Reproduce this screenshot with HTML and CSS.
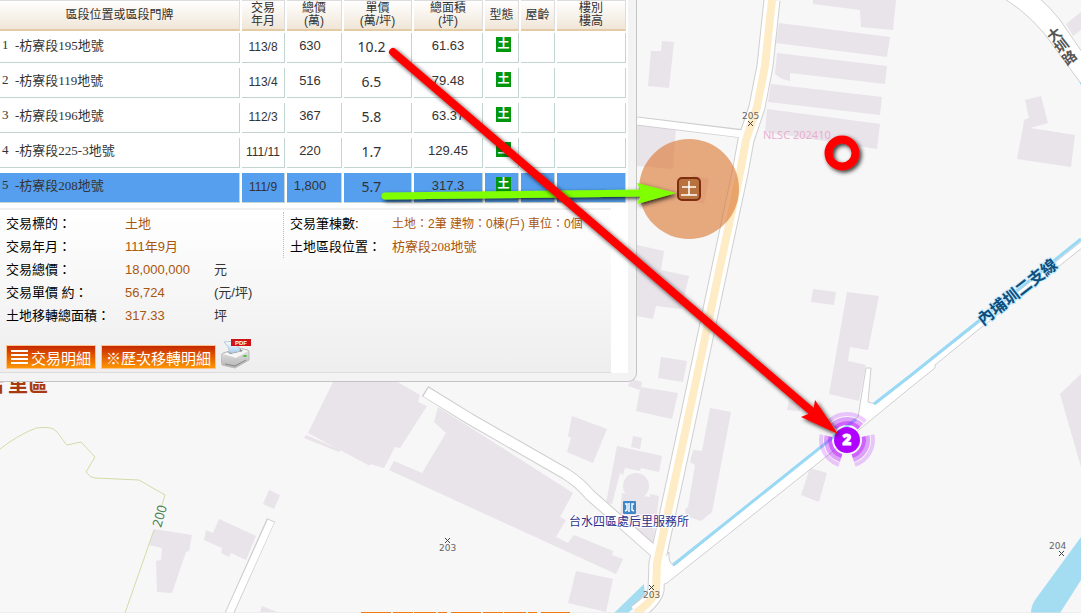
FILE: index.html
```html
<!DOCTYPE html>
<html lang="zh-Hant">
<head>
    <meta charset="UTF-8">
    <meta name="viewport" content="width=device-width, initial-scale=1.0">
    <title>實價登錄地圖</title>
    <link rel="stylesheet" href="styles.css">
</head>
<body>
    <svg class="map" aria-hidden="true">
        <!-- buildings -->
        <g class="building">
            <path d="M662 41L674 42L669 88L648 86L651 51L661 51Z"/>
            <path d="M813 0H896L893 30L861 27L860 10L813 4Z"/>
            <path d="M779 23L890 37L887 57L776 43Z"/>
            <path d="M777 53L887 66L885 84L790 73V81L782 79L775 74Z"/>
            <path d="M771 84L882 97L880 115L768 102Z"/>
            <path d="M767 109L880 124L877 149L765 132Z"/>
            <path d="M637 125L676 128L673 169L637 166Z"/>
            <path d="M693 175L709 179L704 204L690 200Z"/>
            <path d="M637 245L664 251L661 270L689 276L681 309L656 306L653 319L637 316Z"/>
            <path d="M661 357L687 361L683 382L658 378Z"/>
            <path d="M631 379L642 382L641 387L678 393L672 419L636 411L640 390L628 386Z"/>
            <path d="M710 408L731 412L712 512L701 521L686 516L685 509L688 507L695 465L690 462L693 450L702 451Z"/>
            <path d="M572 416L607 429L593 463L567 452L571 438L568 436Z"/>
            <path d="M633 436L642 438L640 449L631 447Z"/>
            <path d="M617 446L662 456L659 472L641 468L640 471L625 468L623 475L620 473L612 504L606 503Z"/>
            <circle cx="636" cy="486" r="13"/>
            <path d="M622 493L650 497V494L659 496L653 543L620 516Z"/>
            <path d="M576 571L613 579L606 612L568 603Z"/>
            <path d="M334 380H394L420 395L418 402L427 406L400 448L395 447L384 468L370 464V466L308 433Z"/>
            <path d="M306 435L341 450L339 452L304 438Z"/>
            <path d="M438 407L573 493L560 517L566 520L556 537L568 543L574 535L613 551L612 555L623 559L616 574L389 470L394 461L422 473L446 433L434 422Z"/>
            <path d="M813 289L836 292L834 305L811 302Z"/>
            <path d="M847 292L879 296L868 350L850 347L848 361L866 365L859 401L829 394Z"/>
            <path d="M789 400L800 404V411L787 410Z"/>
            <path d="M810 468L827 473L819 502L801 495Z"/>
            <path d="M1025 100L1041 96L1048 123L1030 128L1075 135L1071 167L1017 159L1023 127L1024 120L1029 118Z"/>
            <path d="M1066 24L1081 12V30L1073 36Z"/>
            <path d="M1060 394L1081 374V467Z"/>
            <path d="M154 529L192 535L189 551L186 552L172 593L157 592L156 561L161 560L162 548L149 545Z"/>
            <path d="M219 519L256 536L246 560L231 553L229 557L221 553L222 548L204 540L206 530L213 533Z"/>
            <path d="M269 490L280 495L274 509L263 504Z"/>
            <path d="M262 606L277 612H260Z"/>
        </g>

        <!-- contour line -->
        <path class="contour" d="M0 449Q18 435 36 428Q52 426 56 431C61 436 65 444 67 445L81 442L95 457L86 472Q90 478 95 478L139 480L165 495L161 508M154 530L125 613"/>

        <!-- water -->
        <path class="river" d="M1081 537L1035 600Q1031 606 1031 613H1060L1081 580Z"/>
        <path class="river" d="M644 584L614 613H628L645 598Z"/>

        <!-- roads: edge, surface, centre -->
        <path class="road-edge wide" d="M772 0L765 66L757 107L746 140L740 173L724 248L713 300L682 447L657 563L656 590Q654 600 636 613"/>
        <path class="road-edge mid" d="M425 391L470 419L566 474Q580 483 590 495L655 552"/>
        <path class="road-edge side" d="M637 121L745 134M271 520L229 614"/>
        <path class="road-shape" d="M1005 -1Q1035 18 1055 48L1082 85V52L1060 20Q1050 7 1040 -1Z"/>
        <path class="road-shape" d="M655 588L667 583L832 452L910 388L935 368V365L978 330L1082 248V241L876 404L868 402L871 368H866L858 417L674 566Q668 563 669 552L650 576Z"/>
        <path class="road mid" d="M426 392L470 419L566 474Q580 483 590 495L657 554"/>
        <path class="road side" d="M637 121L750 135M271 521L229 614"/>
        <path class="road wide" d="M772 0L765 66L757 107L746 140L740 173L724 248L713 300L682 447L657 563L656 590Q654 600 636 613"/>
        <path class="road-main" d="M772 0L765 66L757 107L746 140L740 173L724 248L713 300L682 447L657 563L656 590Q654 600 636 613"/>
        <path class="canal" d="M673 565L856 419M874 404L910 376L1081 239M1081 82L1090 100"/>

        <!-- spot heights -->
        <g class="spot-mark">
            <path d="M748 121l5 5m0-5l-5 5M445 538l5 5m0-5l-5 5M649 585l5 5m0-5l-5 5M1059 551l5 5m0-5l-5 5"/>
        </g>
        <g class="spot-label">
            <text x="742" y="119">205</text>
            <text x="439" y="551">203</text>
            <text x="643" y="598">203</text>
            <text x="1049" y="549">204</text>
        </g>
        <text class="contour-label" transform="translate(161 528) rotate(-74)">200</text>
        <text class="watermark" x="763" y="139">NLSC 202410</text>

        <!-- place names -->
        <text class="town" x="-16 8 28" y="392">后里區</text>
        <text class="road-name" x="1052 1059 1067" y="43 54 66" rotate="-38">大圳路</text>
        <text class="canal-name" transform="translate(983 326) rotate(-38)">內埔圳二支線</text>
        <rect class="water-icon" x="623" y="501" width="13" height="13" rx="1"/>
        <path class="water-glyph" d="M629 503v9M625 504h2v6l-2 1M634 504h-2v6l2 1"/>
        <text class="place" x="569" y="526">台水四區處后里服務所</text>

        <path class="foot-line" d="M0 613H1081"/>
        <path class="foot-marks" d="M361 613H570"/>
    </svg>

    <main class="panel">
        <div class="panel-body">
            <table class="deals">
                <thead>
                    <tr>
                        <th>區段位置或區段門牌</th>
                        <th>交易<br>年月</th>
                        <th>總價<br>(萬)</th>
                        <th>單價<br>(萬/坪)</th>
                        <th>總面積<br>(坪)</th>
                        <th>型態</th>
                        <th>屋齡</th>
                        <th>樓別<br>樓高</th>
                    </tr>
                </thead>
                <tbody>
                    <tr>
                        <td class="name"><span class="no">1</span>-枋寮段195地號</td>
                        <td class="date">113/8</td>
                        <td>630</td>
                        <td class="unit-price">10.2</td>
                        <td>61.63</td>
                        <td><span class="type">土</span></td>
                        <td></td>
                        <td></td>
                    </tr>
                    <tr>
                        <td class="name"><span class="no">2</span>-枋寮段119地號</td>
                        <td class="date">113/4</td>
                        <td>516</td>
                        <td class="unit-price">6.5</td>
                        <td>79.48</td>
                        <td><span class="type">土</span></td>
                        <td></td>
                        <td></td>
                    </tr>
                    <tr>
                        <td class="name"><span class="no">3</span>-枋寮段196地號</td>
                        <td class="date">112/3</td>
                        <td>367</td>
                        <td class="unit-price">5.8</td>
                        <td>63.37</td>
                        <td><span class="type">土</span></td>
                        <td></td>
                        <td></td>
                    </tr>
                    <tr>
                        <td class="name"><span class="no">4</span>-枋寮段225-3地號</td>
                        <td class="date">111/11</td>
                        <td>220</td>
                        <td class="unit-price">1.7</td>
                        <td>129.45</td>
                        <td><span class="type">土</span></td>
                        <td></td>
                        <td></td>
                    </tr>
                    <tr class="selected">
                        <td class="name"><span class="no">5</span>-枋寮段208地號</td>
                        <td class="date">111/9</td>
                        <td>1,800</td>
                        <td class="unit-price">5.7</td>
                        <td>317.3</td>
                        <td><span class="type">土</span></td>
                        <td></td>
                        <td></td>
                    </tr>
                </tbody>
            </table>

            <section class="detail">
                <div class="detail-cols">
                    <dl class="facts">
                        <dt>交易標的：</dt><dd>土地</dd><dd class="unit"></dd>
                        <dt>交易年月：</dt><dd>111年9月</dd><dd class="unit"></dd>
                        <dt>交易總價：</dt><dd>18,000,000</dd><dd class="unit">元</dd>
                        <dt>交易單價 約：</dt><dd>56,724</dd><dd class="unit">(元/坪)</dd>
                        <dt>土地移轉總面積：</dt><dd>317.33</dd><dd class="unit">坪</dd>
                    </dl>
                    <dl class="facts place-facts">
                        <dt>交易筆棟數:</dt><dd class="count">土地：2筆 建物：0棟(戶) 車位：0個</dd>
                        <dt>土地區段位置：</dt><dd class="lot">枋寮段208地號</dd>
                    </dl>
                </div>
                <div class="actions">
                    <button type="button" class="action">
                        <svg width="17" height="14" aria-hidden="true"><path d="M0 1h17M0 5h17M0 9h17M0 13h17" stroke="#fff" stroke-width="2"/></svg>交易明細
                    </button>
                    <button type="button" class="action">※歷次移轉明細</button>
                    <button type="button" class="print" aria-label="PDF">
                        <svg width="30" height="30" aria-hidden="true">
                            <defs>
                                <linearGradient id="tray" x1="0" y1="0" x2="0" y2="1">
                                    <stop offset="0" stop-color="#e8e8e8"/>
                                    <stop offset="1" stop-color="#b4b4b4"/>
                                </linearGradient>
                                <linearGradient id="sheet" x1="0" y1="0" x2="0" y2="1">
                                    <stop offset="0" stop-color="#ffffff"/>
                                    <stop offset="1" stop-color="#a9cdf0"/>
                                </linearGradient>
                            </defs>
                            <path d="M0 17Q0 15 2 14L18 9L27 11Q28 12 28 14V21L14 29L1 26Z" fill="url(#tray)" stroke="#bbb" stroke-width="1"/>
                            <path d="M2 15L19 10L27 12L15 19Z" fill="#f6f6f6"/>
                            <path d="M7 13L19 10L22 12L9 15Z" fill="#777"/>
                            <path d="M3 3L15 2L19 12L9 14Q8 7 3 3Z" fill="url(#sheet)" stroke="#b9cbd9" stroke-width="1"/>
                            <path d="M4 25L14 27L25 21" fill="none" stroke="#888" stroke-width="1"/>
                            <ellipse cx="24" cy="17" rx="2" ry="1" fill="#4cc02c"/>
                            <rect x="10" y="0" width="20" height="7" fill="#cf1217"/>
                            <text x="20" y="6" class="pdf">PDF</text>
                        </svg>
                    </button>
                </div>
            </section>
        </div>
    </main>

    <svg class="marks" aria-hidden="true">
        <defs>
            <filter id="shadow" x="-50%" y="-50%" width="200%" height="200%">
                <feDropShadow dx="2" dy="2" stdDeviation="2" flood-color="#000" flood-opacity="0.8"/>
            </filter>
        </defs>
        <!-- selected plot -->
        <circle cx="689" cy="189" r="50" fill="#dc7832" fill-opacity="0.62"/>
        <rect x="678" y="178" width="22" height="22" rx="4" fill="#b8723e" stroke="#7d2d10" stroke-width="2"/>
        <path d="M689 181v14M682 187h14M681 195h16" stroke="#fff" stroke-width="1.5" fill="none"/>

        <!-- numbered pin -->
        <g transform="rotate(-12 847 440)" class="waves">
            <circle cx="847" cy="440" r="17" pathLength="360" stroke-opacity="0.6"/>
            <circle cx="847" cy="440" r="21" pathLength="360" stroke-opacity="0.35"/>
            <circle cx="847" cy="440" r="26" pathLength="360" stroke-opacity="0.2"/>
        </g>
        <circle cx="847" cy="440" r="13" fill="#b000ff"/>
        <text x="847" y="445" class="pin-no">2</text>

        <!-- pointers -->
        <g filter="url(#shadow)">
            <path d="M385 196L645 193" stroke="#80ff00" stroke-width="7" stroke-linecap="round"/>
            <path d="M676 193L637 183L642 193L637 204Z" fill="#80ff00"/>
        </g>
        <g filter="url(#shadow)">
            <path d="M393 52L816 415" stroke="#f00" stroke-width="8" stroke-linecap="round"/>
            <path d="M838 434L815 400L813 412L801 417Z" fill="#f00"/>
        </g>
        <circle cx="842" cy="153" r="13.5" fill="none" stroke="#f00" stroke-width="8" filter="url(#shadow)"/>
    </svg>
</body>
</html>
```

FILE: styles.css
```css
body {
    margin: 0;
    height: 100vh;
    overflow: hidden;
    position: relative;
    background-color: #f7f7f7;
    font-family: "Liberation Sans", "Noto Sans CJK TC", sans-serif;
    font-size: 13px;
    color: #333;
}

/* map */
.map, .marks {
    position: absolute;
    top: 0;
    left: 0;
    width: 100%;
    height: 100%;
}
.marks {
    pointer-events: none;
}
.building {
    fill: #e9e3ea;
}
.contour {
    fill: none;
    stroke: #d3dba8;
}
.river {
    fill: #a4dcf1;
}
.canal {
    fill: none;
    stroke: #99d9f5;
    stroke-width: 3;
}
.road-edge, .road, .road-main {
    fill: none;
    stroke: #fff;
}
.road-edge {
    stroke: #cfcfcf;
}
.road-shape {
    fill: #fff;
    stroke: #cfcfcf;
}
.road.wide { stroke-width: 15; }
.road-edge.wide { stroke-width: 17; }
.road.mid { stroke-width: 10; }
.road-edge.mid { stroke-width: 12; }
.road.side { stroke-width: 7; }
.road-edge.side { stroke-width: 9; }
.road-main {
    stroke: #feecc6;
    stroke-width: 8;
}
.spot-mark {
    fill: none;
    stroke: #444;
}
.spot-label {
    font: 9px "DejaVu Sans", sans-serif;
    fill: #666;
}
.contour-label {
    font: 13px "Noto Sans", sans-serif;
    fill: #4c8150;
}
.watermark {
    font: 11px "Noto Sans", sans-serif;
    fill: #e8b0d0;
}
.town {
    font-size: 20px;
    font-weight: bold;
    fill: #a83a12;
}
.road-name {
    font-size: 14px;
    font-weight: bold;
    fill: #555;
}
.canal-name {
    font-size: 16px;
    font-weight: bold;
    fill: #0e4f7e;
    stroke: #c5e9fa;
    stroke-width: 2;
    paint-order: stroke;
}
.place {
    font-size: 12px;
    fill: #2b2f8c;
    stroke: #fff;
    stroke-width: 2;
    paint-order: stroke;
}
.water-icon {
    fill: #3f87c9;
}
.water-glyph {
    fill: none;
    stroke: #fff;
    stroke-width: 1.5;
}
.foot-line {
    stroke: #e4e4e4;
}
.foot-marks {
    stroke: #f07a10;
    stroke-width: 2;
    stroke-dasharray: 30 2 20 1 22 2 9 4;
}

/* result panel */
.panel {
    position: relative;
    width: fit-content;
    padding: 0 8px 8px 0;
    background: #f3f3f3;
    border: 1px solid #c4c4c4;
    border-width: 0 1px 1px 0;
    border-radius: 0 0 9px 0;
}
.panel-body {
    padding-right: 2px;
    background: #fff;
}
.deals, .deals thead, .deals tbody {
    display: block;
}
.deals tr {
    display: grid;
    grid-template-columns: 240px 43px 55px 68px 69px 34px 34px 69px;
    column-gap: 2px;
    margin-bottom: 5px;
}
.deals thead tr {
    margin-bottom: 2px;
}
.deals th, .deals td {
    display: flex;
    align-items: center;
    justify-content: center;
    box-sizing: border-box;
    padding: 0;
    text-align: center;
}
.deals th {
    height: 31px;
    border: 1px solid #ddd;
    border-width: 1px 1px 2px 0;
    border-bottom-color: #e2cba5;
    background: linear-gradient(#fff, #f0e6d8);
    font-size: 12px;
    font-weight: normal;
    line-height: 13px;
}
.deals td {
    height: 30px;
    padding-bottom: 4px;
    padding-right: 8px;
    border: 1px solid #c3d5d2;
    border-width: 0 1px 1px 0;
}
.deals td.name {
    justify-content: flex-start;
    padding-left: 2px;
    padding-bottom: 6px;
    font-family: "Liberation Serif", "Noto Sans CJK TC", serif;
}
.deals td.date {
    padding: 0 0 2px;
    font-size: 12px;
}
.deals td.unit-price {
    padding-bottom: 2px;
    padding-right: 12px;
    font-family: "Noto Sans", sans-serif;
    font-size: 14px;
}
.deals td:nth-child(5) {
    padding-right: 0;
}
.deals td:nth-child(6) {
    padding-bottom: 6px;
    padding-right: 0;
    padding-left: 4px;
}
.no {
    width: 13px;
    text-align: left;
}
.type {
    width: 15px;
    height: 15px;
    background: #00960d;
    color: #fff;
    font-size: 12px;
    font-weight: bold;
    line-height: 14px;
}
.selected td {
    background: #559fee;
}

/* detail of the selected deal */
.detail {
    box-sizing: border-box;
    width: 611px;
    height: 165px;
    padding: 2px 6px 0;
    border-top: 2px solid #f0f0f0;
    border-bottom: 1px solid #ddd;
    background: linear-gradient(#fff, #eee);
}
.detail-cols {
    display: flex;
    align-items: flex-start;
}
.facts {
    display: grid;
    grid-template-columns: 119px 89px 69px;
    margin: 0;
    color: #000;
    line-height: 23px;
    white-space: nowrap;
}
.facts dd {
    margin: 0;
    color: #a9560e;
}
.facts .unit {
    color: #333;
}
.place-facts {
    grid-template-columns: 102px auto;
    padding-left: 6px;
    border-left: 1px dotted #bbb;
}
.facts .count {
    font-size: 12px;
    line-height: 25px;
    height: 23px;
}
.facts .lot {
    font-family: "Liberation Serif", "Noto Sans CJK TC", serif;
}
.actions {
    display: flex;
    align-items: flex-end;
    gap: 5px;
    margin-top: 12px;
}
.action {
    display: flex;
    align-items: center;
    gap: 3px;
    height: 24px;
    padding: 0 4px;
    border: 1px solid #ffc48c;
    background: linear-gradient(#c62800, #ff9500);
    color: #fff;
    font-family: inherit;
    font-size: 15px;
    cursor: pointer;
}
.print {
    display: block;
    height: 30px;
    padding: 0;
    border: 0;
    background: none;
    cursor: pointer;
}
.pdf {
    font-size: 6px;
    font-weight: bold;
    fill: #fff;
    text-anchor: middle;
}

/* pin */
.waves {
    fill: none;
    stroke: #b000ff;
    stroke-width: 4;
    stroke-dasharray: 84 36 84 33 90 33;
}
.pin-no {
    font: 800 15px "Open Sans", sans-serif;
    fill: #fff;
    stroke: #fff;
    text-anchor: middle;
}
```
